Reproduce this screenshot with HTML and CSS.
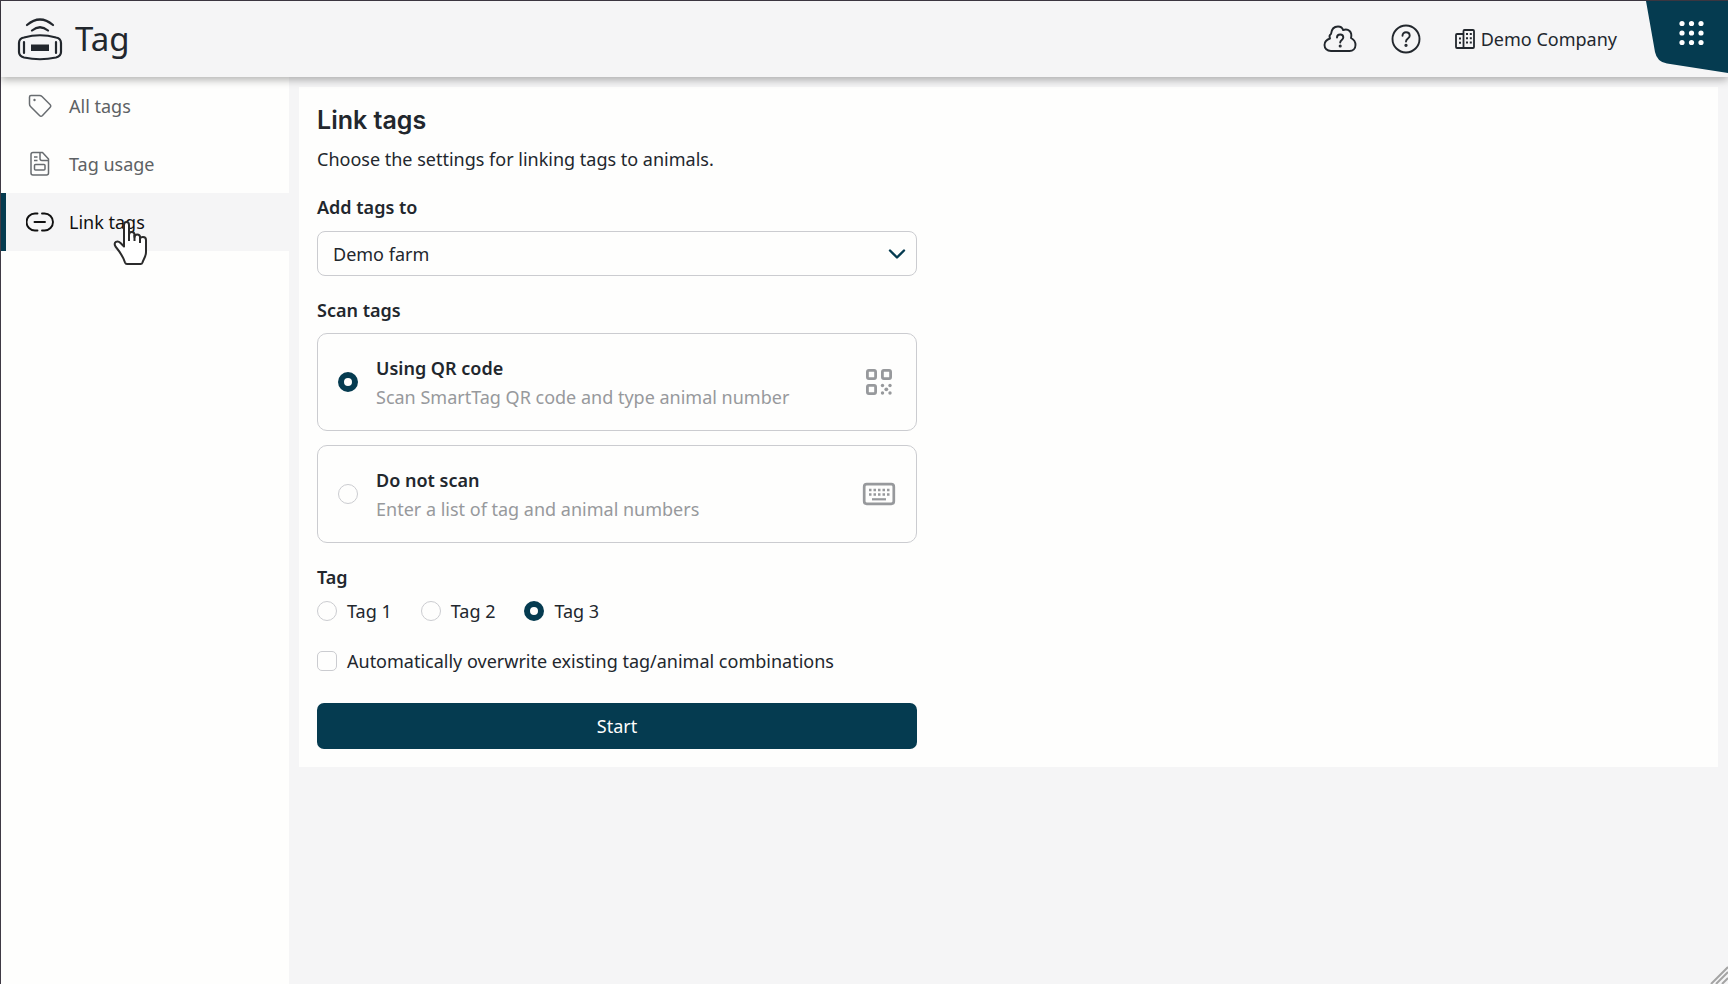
FILE: index.html
```html
<!DOCTYPE html>
<html lang="en">
<head>
<meta charset="utf-8">
<meta name="viewport" content="width=device-width, initial-scale=1">
<title>Tag - Link tags</title>
<link rel="stylesheet" href="styles.css">
</head>
<body>
<div class="app">
  <header class="topbar">
    <a class="brand" href="#">
      <svg class="brand-icon" viewBox="0 0 46 46" fill="none" stroke="#22272d" stroke-width="2.2" stroke-linecap="round">
        <path d="M10 9Q23-2 36 9M15 14.500Q23 8 31 14.500"/>
        <path d="M7 21.500Q23 17 39 21.500Q44 22.500 44 27V36Q44 40 39 41.500Q23 45 7 41.500Q2 40 2 36V27Q2 22.500 7 21.500Z"/>
        <path d="M7 26V37M39 26V37"/>
        <path d="M14 28.500H32V35H14Z" fill="#22272d" stroke="none"/>
      </svg>
      <span>Tag</span>
    </a>
    <div class="tools">
      <button class="icon-button" type="button" aria-label="Cloud help">
        <svg width="34" height="30" viewBox="0 0 34 30" fill="none" stroke="#22272d" stroke-width="1.900" stroke-linecap="round" stroke-linejoin="round">
          <path d="M8 27C4 27 1.500 24.500 1.500 21C1.500 18 4 15.500 7 14.500C6 12 7 10.500 8 10C8.500 5.500 11 2.500 15 2.500C18 2.500 19.500 4 20 6C25.500 4 29.500 8 28 14C31 15.500 32.500 18 32.500 21C32.500 24.500 30 27 26.500 27Z"/>
          <path d="M14 13.500C14 11.500 15.500 10.500 17.200 10.500S20.300 11.700 20.300 13.600C20.300 16 17.200 16 17.200 18.500"/><circle cx="17.200" cy="22" r=".6" fill="#22272d"/>
        </svg>
      </button>
      <button class="icon-button" type="button" aria-label="Help">
        <svg width="30" height="30" viewBox="0 0 30 30" fill="none" stroke="#22272d" stroke-width="1.900" stroke-linecap="round">
          <circle cx="15" cy="15" r="13.500"/>
          <path d="M11.500 11.700C11.500 9.500 13 8.200 15 8.200S18.700 9.500 18.700 11.700C18.700 14.500 15 14.500 15 17.500"/><circle cx="15" cy="21.300" r=".7" fill="#22272d"/>
        </svg>
      </button>
      <button class="company" type="button">
        <svg width="20" height="20" viewBox="0 0 20 20" fill="none" stroke="#22272d" stroke-width="1.800" stroke-linejoin="round">
          <path d="M8.500 19V2Q8.500 1 9.500 1H18Q19 1 19 2V18Q19 19 18 19H2Q1 19 1 18V6Q1 5 2 5H8.500"/>
          <path d="M12 4V14.500M15.800 4V14.500" stroke-width="2" stroke-dasharray="2 2.200"/>
          <path d="M5 8.500V15" stroke-width="2" stroke-dasharray="2 2.200"/>
        </svg>
        <span>Demo Company</span>
      </button>
    </div>
    <button class="launcher" type="button" aria-label="Applications">
      <svg width="82" height="72" viewBox="0 0 82 72">
        <path d="M0 0H82V72L21 62.500Q11 61 9 51Z" fill="#053b50"/>
        <g fill="#fff"><circle cx="36" cy="22.500" r="2.600"/><circle cx="45.500" cy="22.500" r="2.600"/><circle cx="55" cy="22.500" r="2.600"/><circle cx="36" cy="32" r="2.600"/><circle cx="45.500" cy="32" r="2.600"/><circle cx="55" cy="32" r="2.600"/><circle cx="36" cy="41.500" r="2.600"/><circle cx="45.500" cy="41.500" r="2.600"/><circle cx="55" cy="41.500" r="2.600"/></g>
      </svg>
    </button>
  </header>

  <div class="body">
    <nav class="sidebar">
      <a class="nav-item" href="#">
        <svg width="28" height="28" viewBox="0 0 28 28" fill="none" stroke="#686c70" stroke-width="1.500" stroke-linejoin="round">
          <path d="M3.500 5Q3.500 3.500 5 3.500H13.500Q15 3.500 16 4.500L24 12.500Q25.500 14 24 15.500L16.500 23.500Q15 25 13.500 23.500L4.500 14.500Q3.500 13.500 3.500 12Z"/><circle cx="8.500" cy="8" r="1.200" fill="#686c70" stroke="none"/>
        </svg>
        <span>All tags</span>
      </a>
      <a class="nav-item" href="#">
        <svg width="28" height="28" viewBox="0 0 28 28" fill="none" stroke="#686c70" stroke-width="1.500" stroke-linejoin="round">
          <path d="M7 2.500H16.500L22.500 9V23Q22.500 25 20.500 25H7Q5 25 5 23V4.500Q5 2.500 7 2.500ZM14 3V8.500Q14 10.500 16 10.500H22M8 7H11.500M8 10.500H11.500"/><rect x="8.500" y="14.500" width="10.500" height="5.500" rx="1"/>
        </svg>
        <span>Tag usage</span>
      </a>
      <a class="nav-item is-active" href="#" aria-current="page">
        <svg width="28" height="28" viewBox="0 0 28 28" fill="none" stroke="#111" stroke-width="1.900" stroke-linecap="round">
          <path d="M11.500 5.500H9A8.500 8.500 0 0 0 9 22.500H11.500M16 5.500H18.500A8.500 8.500 0 0 1 18.500 22.500H16M8.500 14H19"/>
        </svg>
        <span>Link tags</span>
        <svg class="pointer" width="36" height="48" viewBox="0 0 36 48" fill="#fff" stroke="#2b2b2b" stroke-width="2" stroke-linejoin="round">
          <path d="M12 44.500C10 38 7 34 2.500 28.500C0 24 4.500 22 7.500 25L11 28.500V7C11 3 16 3 16 7V17C16 13 21.500 13 21.500 17V19C21.500 15.500 27 15.500 27 19V21.500C27 18 33 18 33 22V34C33 39 30 42 29.500 44.500Q29 46 27.500 46H14Q12.500 46 12 44.500Z"/><path d="M11 20V29M16 16V23M21.500 17V23M27 19V25" fill="none"/>
        </svg>
      </a>
    </nav>

    <main class="content">
      <form class="panel">
        <div class="panel-inner">
          <h1 class="title">Link tags</h1>
          <p class="intro">Choose the settings for linking tags to animals.</p>

          <label class="label" for="farm">Add tags to</label>
          <div class="select-wrap">
            <select class="select" id="farm"><option>Demo farm</option></select>
            <svg class="chevron" width="18" height="12" viewBox="0 0 18 12" fill="none" stroke="#053b50" stroke-width="2.400" stroke-linecap="round" stroke-linejoin="round"><path d="M2 2.500L9 9.500L16 2.500"/></svg>
          </div>

          <fieldset class="group">
            <legend class="label label-cards">Scan tags</legend>
            <div class="cards">
              <label class="card">
                <input class="radio" type="radio" name="scan" checked>
                <span class="card-text"><strong>Using QR code</strong><span class="hint">Scan SmartTag QR code and type animal number</span></span>
                <svg width="34" height="28" viewBox="0 0 34 28" fill="none" stroke="#97999c" stroke-width="2.800">
                  <rect x="5.400" y="2.400" width="8.200" height="8.200" rx="1.500"/><rect x="20.400" y="2.400" width="8.200" height="8.200" rx="1.500"/><rect x="5.400" y="17.400" width="8.200" height="8.200" rx="1.500"/>
                  <g fill="#97999c" stroke="none"><circle cx="20.500" cy="17.500" r="1.700"/><circle cx="28" cy="17.500" r="1.700"/><circle cx="24.300" cy="21.300" r="1.900"/><circle cx="20.500" cy="25" r="1.700"/><circle cx="28" cy="25" r="1.700"/></g>
                </svg>
              </label>
              <label class="card">
                <input class="radio" type="radio" name="scan">
                <span class="card-text"><strong>Do not scan</strong><span class="hint">Enter a list of tag and animal numbers</span></span>
                <svg width="34" height="28" viewBox="0 0 34 28" fill="none" stroke="#97999c" stroke-width="2.700">
                  <rect x="2.200" y="4.200" width="29.600" height="19.600" rx="2.500"/>
                  <path d="M7 10H27.500M7 14.500H27.500" stroke-dasharray="2.500 2"/><path d="M10 19.300H24" stroke-width="2.200"/>
                </svg>
              </label>
            </div>
          </fieldset>

          <fieldset class="group">
            <legend class="label label-choices">Tag</legend>
            <div class="choices">
              <label class="choice"><input class="radio" type="radio" name="tag"><span>Tag 1</span></label>
              <label class="choice"><input class="radio" type="radio" name="tag"><span>Tag 2</span></label>
              <label class="choice"><input class="radio" type="radio" name="tag" checked><span>Tag 3</span></label>
            </div>
          </fieldset>

          <label class="choice overwrite"><input class="checkbox" type="checkbox"><span>Automatically overwrite existing tag/animal combinations</span></label>
          <button class="start" type="button">Start</button>
        </div>
      </form>
    </main>
  </div>
  <svg class="grip" width="18" height="18" viewBox="0 0 18 18" stroke="#a4a4a4" stroke-width="2"><path d="M1 18L18 1M6 18L18 6M12 18L18 12"/></svg>
</div>
</body>
</html>
```

FILE: styles.css
```css
*, *::before, *::after { box-sizing: border-box; }

body {
  margin: 0;
  background: #f5f5f6;
  color: #22272d;
  font-family: "Noto Sans", "Open Sans", sans-serif;
  font-size: 18px;
  line-height: 24px;
}

button, select, input { font: inherit; color: inherit; margin: 0; }
button { border: 0; background: none; padding: 0; cursor: pointer; }
a { color: inherit; text-decoration: none; }
svg { display: block; flex: none; }

.app {
  position: relative;
  display: flex;
  flex-direction: column;
  min-height: 100vh;
  border-top: 1px solid #3f3a45;
  border-left: 1px solid #3f3a45;
}

.topbar {
  position: relative;
  z-index: 1;
  display: flex;
  align-items: center;
  justify-content: space-between;
  height: 76px;
  padding-left: 16px;
  background: #f5f5f6;
  box-shadow: 0 3px 8px rgba(0, 0, 0, .3);
}

.brand { display: flex; align-items: center; gap: 12px; font-size: 33px; line-height: 48px; }
.brand-icon { width: 46px; height: 46px; }

.tools { display: flex; align-items: center; margin-left: auto; margin-right: 29px; }
.icon-button { margin-right: 34px; }
.company { display: flex; align-items: center; gap: 6px; }
.launcher { align-self: flex-start; }

.body { display: flex; flex: 1; }

.sidebar { width: 288px; flex: none; background: #fefefd; }
.nav-item {
  position: relative;
  display: flex;
  align-items: center;
  gap: 15px;
  height: 58px;
  padding-left: 25px;
  color: #5d6164;
}
.nav-item.is-active { background: #f5f5f6; color: #111; box-shadow: inset 5px 0 #053b50; }
.pointer { position: absolute; left: 112px; top: 25px; z-index: 2; }

.content { flex: 1; padding: 10px 10px 0; }
.panel { padding: 17px 18px 18px; background: #fefefd; }
.panel-inner { display: flex; flex-direction: column; max-width: 600px; }

.title { margin: 0 0 11px; font-family: Inter, sans-serif; font-size: 25px; line-height: 32px; font-weight: 600; }
.intro { margin: 0 0 24px; }
.label { display: block; margin-bottom: 12px; padding: 0; font-weight: 600; }
.label-cards { margin-bottom: 11px; }
.label-choices { margin-bottom: 10px; }

.select-wrap { position: relative; }
.select {
  display: block;
  width: 100%;
  height: 45px;
  padding: 0 48px 0 15px;
  border: 1px solid #cbccd0;
  border-radius: 8px;
  background: #fefefd;
  appearance: none;
}
.chevron { position: absolute; right: 11px; top: 17px; pointer-events: none; }

.group { min-width: 0; margin: 22px 0 0; padding: 0; border: 0; }
.cards { display: flex; flex-direction: column; gap: 14px; }
.card {
  display: flex;
  align-items: center;
  height: 98px;
  padding: 0 20px;
  border: 1px solid #cbccd0;
  border-radius: 10px;
}
.card-text { display: flex; flex: 1; flex-direction: column; gap: 5px; margin-left: 18px; }
.card-text strong { font-weight: 600; }
.hint { color: #97999c; }

.radio, .checkbox {
  flex: none;
  width: 20px;
  height: 20px;
  border: 1px solid #cbccd0;
  background: #fefefd;
  appearance: none;
}
.radio { border-radius: 50%; }
.radio:checked { border: 6px solid #053b50; }
.checkbox { border-radius: 5px; }

.choices { display: flex; gap: 29px; }
.choice { display: flex; align-items: center; gap: 10px; }
.overwrite { margin: 26px 0 30px; }

.start { height: 46px; border-radius: 7px; background: #053b50; color: #fefefd; }

.grip { position: absolute; right: 0; bottom: 0; }
```
